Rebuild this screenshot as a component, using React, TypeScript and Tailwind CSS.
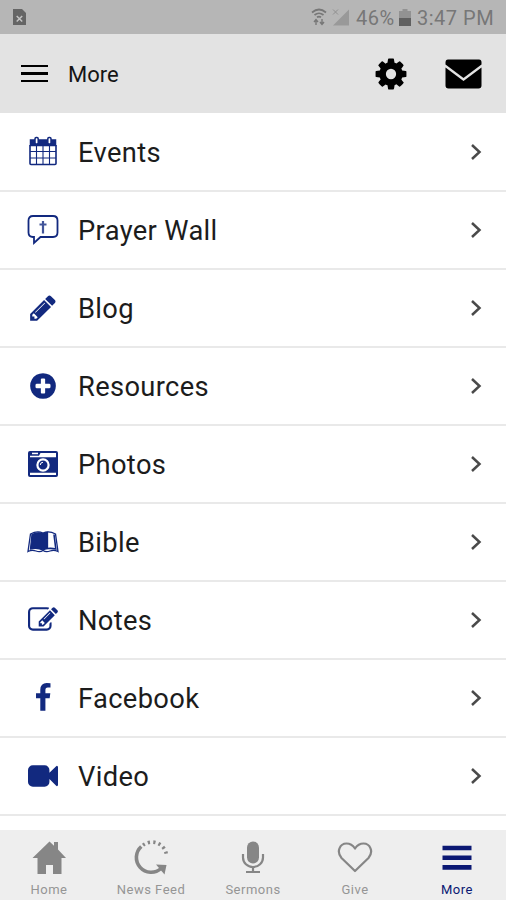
import type {ReactNode} from "react";

const CalendarIcon = () => (
    <svg viewBox="0 0 28 30" className="w-7 h-[30px] -translate-y-px" fill="none" stroke="currentColor">
        <path d="M1.500 4h25v5.500h-25z" fill="currentColor" strokeWidth="1.500"/>
        <path d="M1 9v18.500q0 1 1 1h24q1 0 1-1V9" strokeWidth="1.600"/>
        <path d="M7.500 9v19M14 9v19M20.500 9v19M1 15.500h26M1 22h26" strokeWidth="1.100"/>
        <rect x="6" y="1.500" width="3.200" height="6.500" rx="1.200" fill="#fff" strokeWidth="1.500"/>
        <rect x="18.800" y="1.500" width="3.200" height="6.500" rx="1.200" fill="#fff" strokeWidth="1.500"/>
    </svg>
)

const PrayerIcon = () => (
    <svg viewBox="0 0 32 32" className="size-8" fill="none" stroke="currentColor" strokeWidth="1.8">
        <path d="M6 2h20q4.500 0 4.500 4.500v12q0 4.500-4.500 4.500H13.500L7 29V23H6q-4.500 0-4.500-4.500v-12Q1.500 2 6 2z"/>
        <path d="M16 7v12.500M12.500 10.500h7" strokeWidth="2.200" opacity=".8"/>
    </svg>
)

const PencilIcon = () => (
    <svg viewBox="0 0 1792 1792" className="size-[30px]" fill="currentColor">
        <path d="M491 1536l91-91-235-235-91 91v107h128v128h107zm523-928q0-22-22-22-10 0-17 7l-542 542q-7 7-7 17 0 22 22 22 10 0 17-7l542-542q7-7 7-17zm-54-192l416 416-832 832h-416v-416zm683 96q0 53-37 90l-166 166-416-416 166-165q36-38 90-38 53 0 91 38l235 234q37 39 37 91z"/>
    </svg>
)

const PlusIcon = () => (
    <svg viewBox="0 0 1792 1792" className="size-[30px]" fill="currentColor">
        <path d="M1344 960v-128q0-26-19-45t-45-19h-256v-256q0-26-19-45t-45-19h-128q-26 0-45 19t-19 45v256h-256q-26 0-45 19t-19 45v128q0 26 19 45t45 19h256v256q0 26 19 45t45 19h128q26 0 45-19t19-45v-256h256q26 0 45-19t19-45zm320-64q0 209-103 385.5t-279.5 279.5-385.5 103-385.5-103-279.5-279.5-103-385.5 103-385.5 279.5-279.5 385.5-103 385.5 103 279.5 279.5 103 385.5z"/>
    </svg>
)

const CameraIcon = () => (
    <svg viewBox="0 0 30 26" className="w-[30px] h-[26px]">
        <rect width="30" height="26" rx="2" fill="currentColor"/>
        <path d="M2 4.700h9l1.500-2.700H28v4.200H2zM2 21.800h26v2.200H2z" fill="#fff"/>
        <path d="M4 1.700h6v1.500H4z" fill="#fff"/>
        <circle cx="15" cy="14" r="5.600" fill="currentColor" stroke="#fff" strokeWidth="2.200"/>
        <path d="M12.300 14a2.700 2.700 0 0 1 2.700-2.700" fill="none" stroke="#fff" strokeWidth="1"/>
    </svg>
)

const BookIcon = () => (
    <svg viewBox="0 0 32 22" className="w-8 h-[22px]" fill="none" stroke="currentColor" strokeWidth="1.300">
        <path d="M3.500 3Q10-.500 16 2q6-2.500 12.500 1L31 20.500q-4-2-8-.500-4 1.500-7-.500-3 2-7 .500-4-1.500-8 .500z"/>
        <path d="M5 3.500Q11 .500 16 2.800q2-1 4.500-1.300V17.500q-2.700.300-4.500 1.500-5.500-2.500-12.500-1z" fill="currentColor"/>
        <path d="M27 3.500l1.800 14.500q-3.800-1-8.300-.500" strokeWidth="1.600"/>
    </svg>
)

const NotesIcon = () => (
    <svg viewBox="0 0 1792 1792" className="size-[30px]" fill="currentColor">
        <path d="M888 1184l116-116-152-152-116 116v56h96v96h56zm440-720q-16-16-33 1l-350 350q-17 17-1 33t33-1l350-350q17-17 1-33zm80 594v190q0 119-84.5 203.5t-203.5 84.5h-832q-119 0-203.5-84.5t-84.5-203.5v-832q0-119 84.5-203.5t203.5-84.5h832q63 0 117 25 15 7 18 23 3 17-9 29l-49 49q-14 14-32 8-23-6-45-6h-832q-66 0-113 47t-47 113v832q0 66 47 113t113 47h832q66 0 113-47t47-113v-126q0-13 9-22l64-64q15-15 35-7t20 29zm-96-738l288 288-672 672h-288v-288zm444 132l-92 92-288-288 92-92q28-28 68-28t68 28l152 152q28 28 28 68t-28 68z"/>
    </svg>
)

const FacebookIcon = () => (
    <svg viewBox="0 0 1792 1792" className="size-[30px]" fill="currentColor">
        <path d="M1343 12v264h-157q-86 0-116 36t-30 108v189h293l-39 296h-254v759h-306v-759h-255v-296h255v-218q0-186 104-288.5t277-102.5q147 0 228 12z"/>
    </svg>
)

const VideoIcon = () => (
    <svg viewBox="0 0 1792 1792" className="size-[30px]" fill="currentColor">
        <path d="M1792 352v1088q0 42-39 59-13 5-25 5-27 0-45-19l-403-403v166q0 119-84.500 203.500t-203.500 84.500h-704q-119 0-203.500-84.500t-84.500-203.500v-704q0-119 84.500-203.500t203.500-84.500h704q119 0 203.500 84.500t84.500 203.500v165l403-402q18-19 45-19 12 0 25 5 39 17 39 59z"/>
    </svg>
)

const menu: {name: string, icon: ReactNode}[] = [
    {name: 'Events', icon: <CalendarIcon/>},
    {name: 'Prayer Wall', icon: <PrayerIcon/>},
    {name: 'Blog', icon: <PencilIcon/>},
    {name: 'Resources', icon: <PlusIcon/>},
    {name: 'Photos', icon: <CameraIcon/>},
    {name: 'Bible', icon: <BookIcon/>},
    {name: 'Notes', icon: <NotesIcon/>},
    {name: 'Facebook', icon: <FacebookIcon/>},
    {name: 'Video', icon: <VideoIcon/>},
]

const tabs: {name: string, icon: ReactNode}[] = [
    {
        name: 'Home',
        icon: <path fill="currentColor" d="M18.500 1.500l4.500 4.300V2h4v7.500L35 18h-4.500v16H22v-9h-7v9H6.500V18H1.500z"/>
    },
    {
        name: 'News Feed',
        icon: <g fill="none" stroke="currentColor">
            <path strokeWidth="3.600" d="M8.300 6.500A14.600 14.600 0 0 0 28 28.500"/>
            <path strokeWidth="3.600" strokeDasharray="2.200 3.200" d="M10 5.200A14.600 14.600 0 0 1 33.500 15"/>
            <path fill="currentColor" stroke="none" d="M23 24.500l10.500.500-2 9.500z"/>
        </g>
    },
    {
        name: 'Sermons',
        icon: <>
            <rect x="12" y="1.500" width="12" height="22" rx="6" fill="currentColor"/>
            <path fill="none" stroke="currentColor" strokeWidth="2.200" d="M8 14v3.500a10 9.500 0 0 0 20 0V14M18 27v5M11 32h14"/>
        </>
    },
    {
        name: 'Give',
        icon: <path fill="none" stroke="currentColor" strokeWidth="2.200" strokeLinejoin="round"
                    d="M18 31L4.500 18C-1 11.500 3 3.500 9.500 3.500c4 0 6.500 2 8.500 5 2-3 4.500-5 8.500-5C33 3.500 37 11.500 31.500 18z"/>
    },
    {
        name: 'More',
        icon: <path stroke="currentColor" strokeWidth="4.600" d="M3.500 8h29M3.500 17.700h29M3.500 27.400h29"/>
    },
]

const StatusBar = () => (
    <div className="h-[34px] shrink-0 bg-[#b6b6b6] text-[#777] flex items-center pl-[13px] pr-[10px]">
        <svg viewBox="0 0 13 16" className="w-[13px] h-4">
            <path fill="#656565" d="M0 0h9l4 4v12H0z"/>
            <path stroke="#c4c4c4" strokeWidth="1.500" d="M3.700 7l5.500 5.500M9.200 7l-5.500 5.500"/>
        </svg>
        <svg viewBox="0 0 16 18" className="w-4 h-[18px] ml-auto" fill="none" stroke="#777" strokeWidth="1.700">
            <path d="M1 4.500q7-6 14 0M3.500 7q4.500-3.500 9 0M6 9.300q2-1.300 4 0"/>
            <path d="M5 17v-5.500M3 14l2-2.500 2 2.500M11 11v5.500M9 14l2 2.500 2-2.500" strokeWidth="1.400"/>
        </svg>
        <svg viewBox="0 0 18 18" className="w-[18px] h-[18px] ml-[5px]">
            <path fill="#999" d="M17 1.500V17.500H1z"/>
            <path stroke="#909090" strokeWidth="1" d="M1 1.500l5 5M6 1.500l-5 5"/>
        </svg>
        <span className="w-[39px] ml-[6px] pt-[2px] text-[20px] leading-none tracking-[0.5px] whitespace-nowrap">46%</span>
        <svg viewBox="0 0 12 17" className="w-3 h-[17px] ml-[4px]">
            <path fill="#929292" d="M3.500 0h5v2H12v8H0V2h3.500z"/>
            <path fill="#606060" d="M0 9h12v8H0z"/>
        </svg>
        <span className="w-[79px] ml-[6px] pt-[2px] text-[20px] leading-none tracking-[0.5px] whitespace-nowrap">3:47 PM</span>
    </div>
)

const Header = () => (
    <header className="h-[79px] shrink-0 bg-[#e3e3e3] flex items-center pl-[21px] pr-[24px] text-black">
        <div className="flex flex-col gap-[5px] w-[27px]">
            <span className="h-[2.500px] bg-black"/>
            <span className="h-[2.500px] bg-black"/>
            <span className="h-[2.500px] bg-black"/>
        </div>
        <h1 className="ml-[20px] pt-[2px] text-[22px] leading-none text-[#151515]">More</h1>
        <svg viewBox="0 0 1792 1792" className="size-9 ml-auto" fill="currentColor">
            <path d="M1152 896q0-106-75-181t-181-75-181 75-75 181 75 181 181 75 181-75 75-181zm512-109v222q0 12-8 23t-20 13l-185 28q-19 54-39 91 35 50 107 138 10 12 10 25t-9 23q-27 37-99 108t-94 71q-12 0-26-9l-138-108q-44 23-91 38-16 136-29 186-7 28-36 28h-222q-14 0-24.500-8.500t-11.500-21.500l-28-184q-49-16-90-37l-141 107q-10 9-25 9-14 0-25-11-126-114-165-168-7-10-7-23 0-12 8-23 15-21 51-66.500t54-70.500q-27-50-41-99l-183-27q-13-2-21-12.500t-8-23.500v-222q0-12 8-23t19-13l186-28q14-46 39-92-40-57-107-138-10-12-10-24 0-10 9-23 26-36 98.500-107.500t94.500-71.500q13 0 26 10l138 107q44-23 91-38 16-136 29-186 7-28 36-28h222q14 0 24.500 8.500t11.500 21.500l28 184q49 16 90 37l142-107q9-9 24-9 13 0 25 10 129 119 165 170 7 8 7 22 0 12-8 23-15 21-51 66.500t-54 70.500q26 50 41 98l183 28q13 2 21 12.500t8 23.500z"/>
        </svg>
        <svg viewBox="0 0 37 30" className="w-[37px] h-[30px] ml-[36px]" fill="currentColor">
            <path d="M3 .500h31q2.500 0 2.500 3v2L18.500 19 .500 5.500v-2q0-3 2.500-3z"/>
            <path d="M.500 8.500l18 13.500 18-13.500v18q0 3-3 3h-30q-3 0-3-3z"/>
        </svg>
    </header>
)

const App = () => {
    return (
        <div className="w-full h-[900px] flex flex-col bg-white overflow-hidden font-['Roboto',sans-serif]">
            <StatusBar/>
            <Header/>
            <ul className="flex-1 pt-px">
                {menu.map((el) => (
                    <li key={el.name} className="h-[78px] flex items-center border-b-2 border-[#e9e9e9] pl-[26px] pr-[24px]">
                        <span className="w-[33px] flex justify-center text-[#12297f]">{el.icon}</span>
                        <span className="ml-[19px] pt-[3px] text-[27.3px] leading-none tracking-[0.35px] text-[#1c1c1c]">{el.name}</span>
                        <svg viewBox="0 0 12 18" className="w-3 h-[18px] ml-auto" fill="none" stroke="#4a4a4a" strokeWidth="2.500">
                            <path d="M2 2l7.500 7L2 16"/>
                        </svg>
                    </li>
                ))}
            </ul>
            <nav className="h-[70px] shrink-0 bg-[#eee] flex justify-center">
                {tabs.map((el) => (
                    <div
                        key={el.name}
                        className={`w-[102px] shrink-0 flex flex-col items-center pt-[10px] ${el.name === 'More' ? 'text-[#0b1873]' : 'text-[#868686]'}`}>
                        <svg viewBox="0 0 36 36" className="size-9">{el.icon}</svg>
                        <span className={`mt-[6px] text-[13px] leading-[15px] tracking-[0.5px] ${el.name === 'More' ? '' : 'text-[#959595]'}`}>{el.name}</span>
                    </div>
                ))}
            </nav>
        </div>
    );
};

export default App;
